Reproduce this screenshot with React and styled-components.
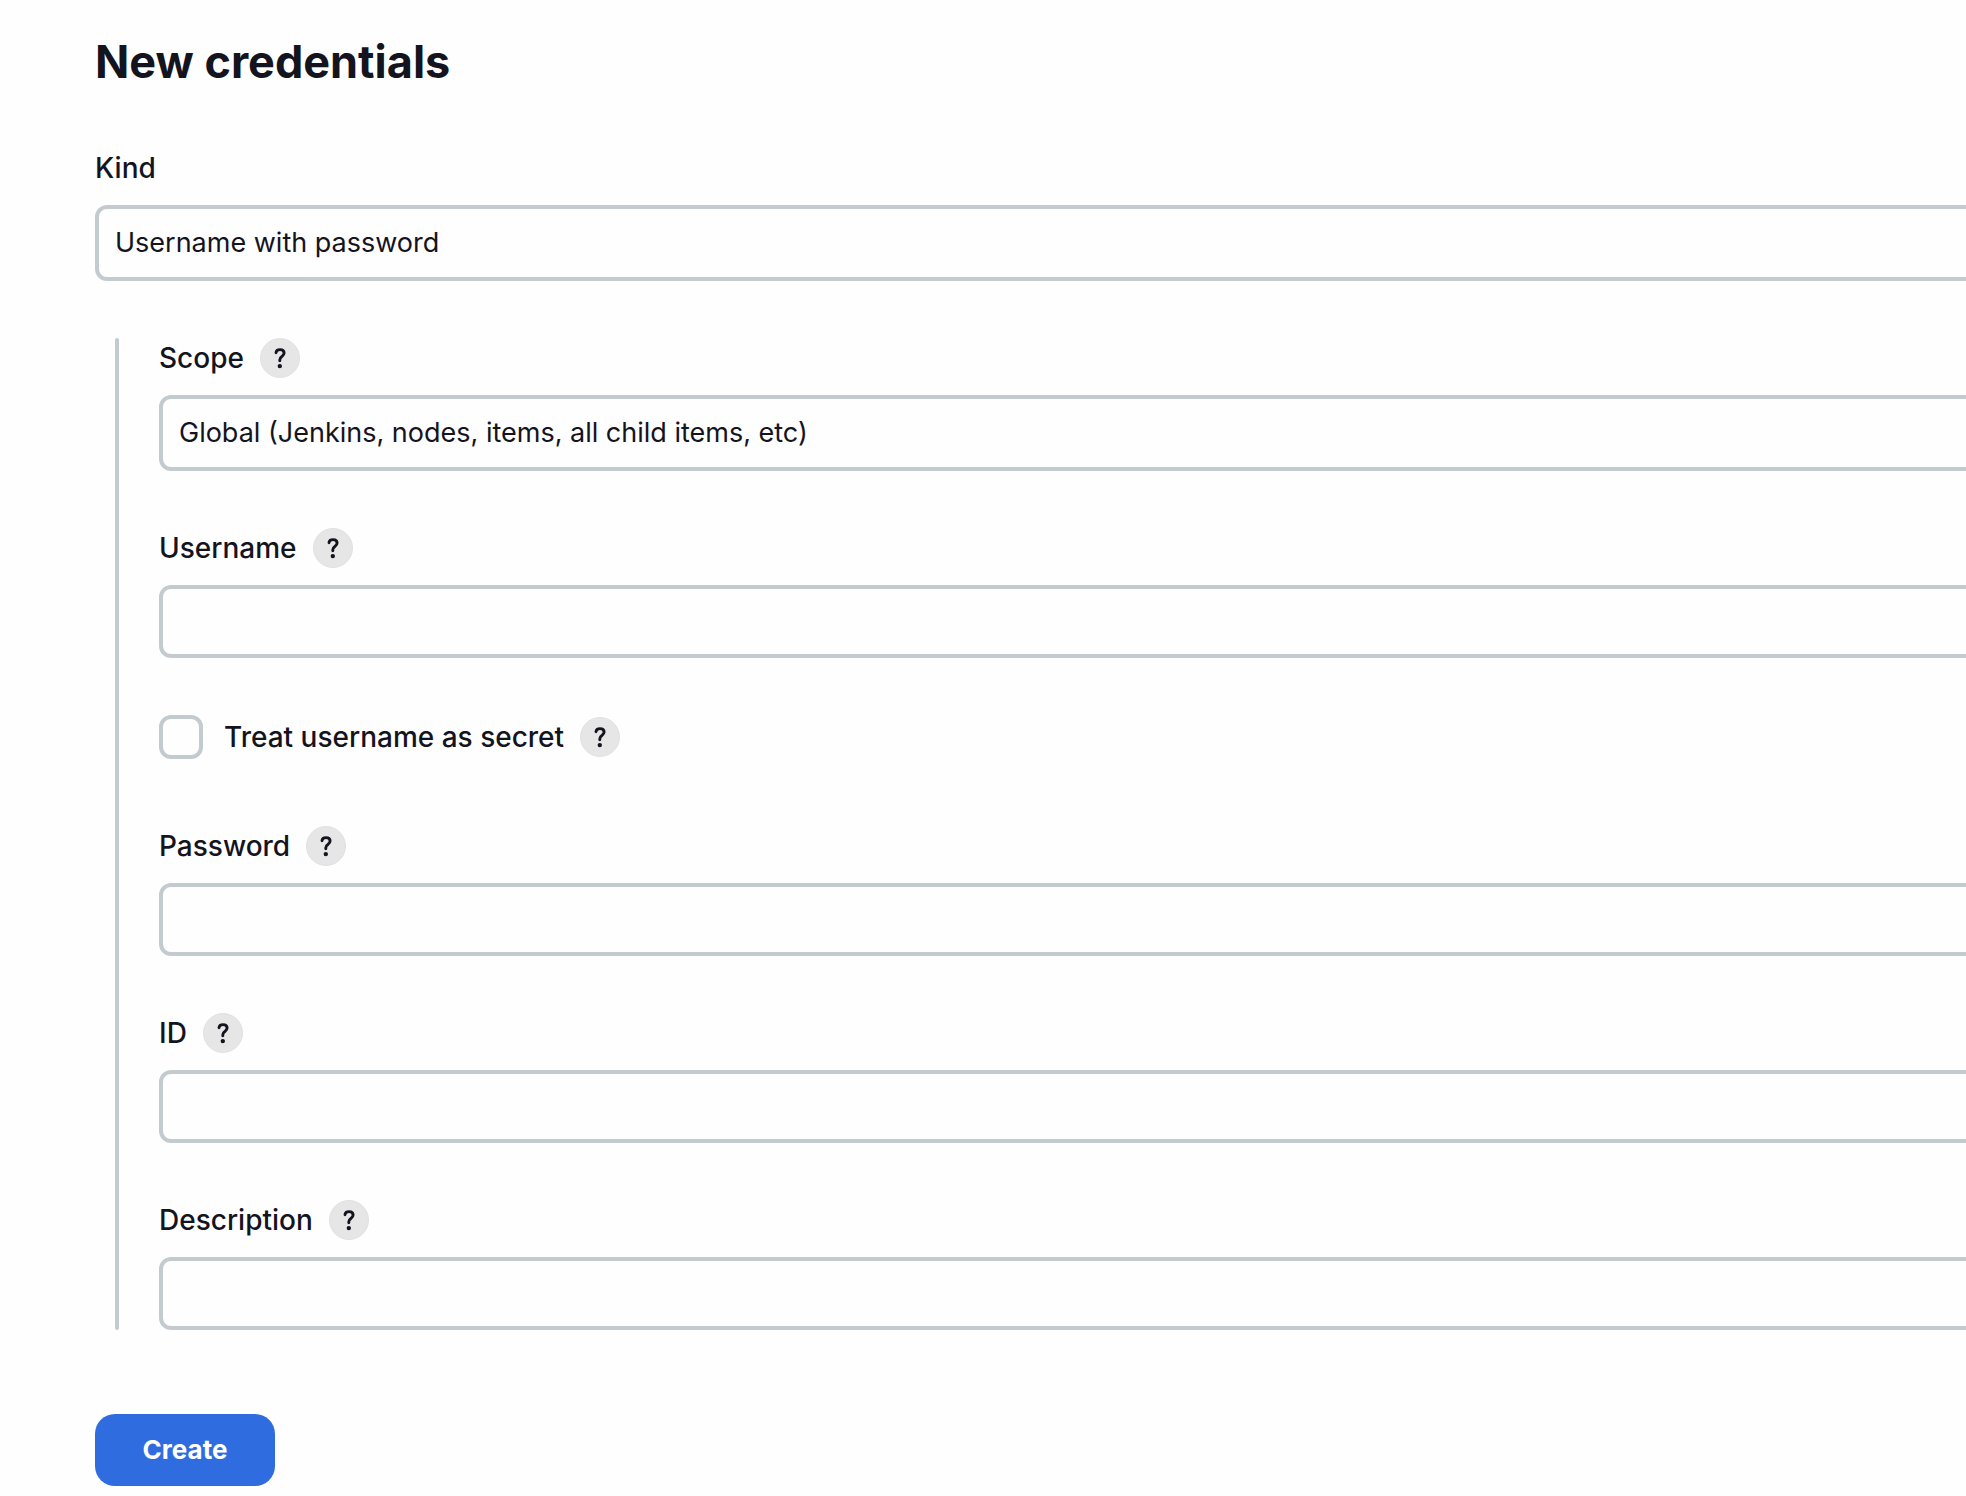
import React, { useState } from 'react';
import styled, { createGlobalStyle } from 'styled-components';

const GlobalStyle = createGlobalStyle`
  *,
  *::before,
  *::after {
    box-sizing: border-box;
  }

  body {
    margin: 0;
    background: #fefefe;
    color: #14141f;
    font-family: Inter, 'Liberation Sans', sans-serif;
    font-size: 28px;
    line-height: 40px;
  }
`;

const Page = styled.main`
  padding: 32px 0 10px 95px;
  overflow-x: hidden;
`;

const Title = styled.h1`
  margin: 0 0 56px;
  font-size: 45px;
  font-weight: 700;
  line-height: 60px;
`;

// the form runs past the right edge of the viewport
const Form = styled.form`
  display: flex;
  flex-direction: column;
  gap: 57px;
  margin-right: -40px;
`;

const Field = styled.div`
  display: flex;
  flex-direction: column;
  gap: 17px;
`;

const FieldHeader = styled.div`
  display: flex;
  align-items: center;
  gap: 16px;
  height: 40px;
`;

const Label = styled.label`
  font-weight: 500;
`;

const control = `
  display: block;
  width: 100%;
  margin: 0;
  padding: 0 16px;
  border: 4px solid #c3cbcf;
  border-radius: 12px;
  background: #fefefe;
  color: inherit;
  font: inherit;
  font-size: 27px;
  outline: none;
  appearance: none;

  &:focus {
    border-color: #2f6cdf;
  }
`;

const Select = styled.select`
  ${control}
  height: 76px;
`;

const Input = styled.input`
  ${control}
  height: 73px;
`;

const Nested = styled.div`
  display: flex;
  flex-direction: column;
  gap: 57px;
  margin-left: 20px;
  padding-left: 44px;
  position: relative;

  &::before {
    content: '';
    position: absolute;
    top: 0;
    bottom: 0;
    left: 0;
    width: 4px;
    border-radius: 2px;
    background: #c3cbcf;
  }
`;

const CheckRow = styled.div`
  display: flex;
  align-items: center;
  gap: 16px;
  padding-bottom: 10px;
`;

const CheckLabel = styled(Label)`
  display: flex;
  align-items: center;
  gap: 21px;
`;

const Checkbox = styled.input`
  width: 44px;
  height: 44px;
  margin: 0;
  border: 4px solid #c3cbcf;
  border-radius: 12px;
  background: #fefefe;
  appearance: none;

  &:checked {
    border-color: #2f6cdf;
    background: #2f6cdf;
  }
`;

const HelpButton = styled.button`
  display: flex;
  align-items: center;
  justify-content: center;
  width: 40px;
  height: 40px;
  padding: 0;
  border: 1px solid #e2e2e2;
  border-radius: 50%;
  background: #e6e6e6;
  color: inherit;
  cursor: pointer;

  svg {
    flex-shrink: 0;
  }
`;

const CreateButton = styled.button`
  align-self: flex-start;
  min-width: 180px;
  height: 72px;
  margin-top: 27px;
  padding: 0 46px;
  border: none;
  border-radius: 20px;
  background: #2f6cdf;
  color: #fff;
  font: inherit;
  font-size: 26px;
  font-weight: 700;
  cursor: pointer;
`;

const Help = ({ topic }) => (
  <HelpButton type="button" aria-label={`Help for feature: ${topic}`}>
    <svg width="40" height="40" viewBox="0 0 40 40" fill="none">
      <path
        d="M16 14.7c.2-2 1.9-3.1 4-3.1 2.4 0 4.1 1.4 4.1 3.5 0 1.6-.9 2.5-2.2 3.4-1.4.9-2.1 1.8-2.1 3.3v1"
        stroke="currentColor"
        strokeWidth="2.9"
        strokeLinecap="round"
        strokeLinejoin="round"
      />
      <circle cx="19.8" cy="28.1" r="2.2" fill="currentColor" />
    </svg>
  </HelpButton>
);

const TextField = ({ id, label, type = 'text' }) => (
  <Field>
    <FieldHeader>
      <Label htmlFor={id}>{label}</Label>
      <Help topic={label} />
    </FieldHeader>
    <Input id={id} name={id} type={type} autoComplete="off" />
  </Field>
);

const App = () => {
  const [secret, setSecret] = useState(false);

  return (
    <>
      <GlobalStyle />
      <Page>
        <Title>New credentials</Title>

        <Form onSubmit={(e) => e.preventDefault()}>
          <Field>
            <FieldHeader>
              <Label htmlFor="kind">Kind</Label>
            </FieldHeader>
            <Select id="kind" name="kind">
              <option>Username with password</option>
            </Select>
          </Field>

          <Nested>
            <Field>
              <FieldHeader>
                <Label htmlFor="scope">Scope</Label>
                <Help topic="Scope" />
              </FieldHeader>
              <Select id="scope" name="scope">
                <option>Global (Jenkins, nodes, items, all child items, etc)</option>
              </Select>
            </Field>

            <TextField id="username" label="Username" />

            <CheckRow>
              <CheckLabel htmlFor="usernameSecret">
                <Checkbox
                  id="usernameSecret"
                  type="checkbox"
                  checked={secret}
                  onChange={(e) => setSecret(e.target.checked)}
                />
                Treat username as secret
              </CheckLabel>
              <Help topic="Treat username as secret" />
            </CheckRow>

            <TextField id="password" label="Password" type="password" />
            <TextField id="id" label="ID" />
            <TextField id="description" label="Description" />
          </Nested>

          <CreateButton type="submit">Create</CreateButton>
        </Form>
      </Page>
    </>
  );
};

export default App;
